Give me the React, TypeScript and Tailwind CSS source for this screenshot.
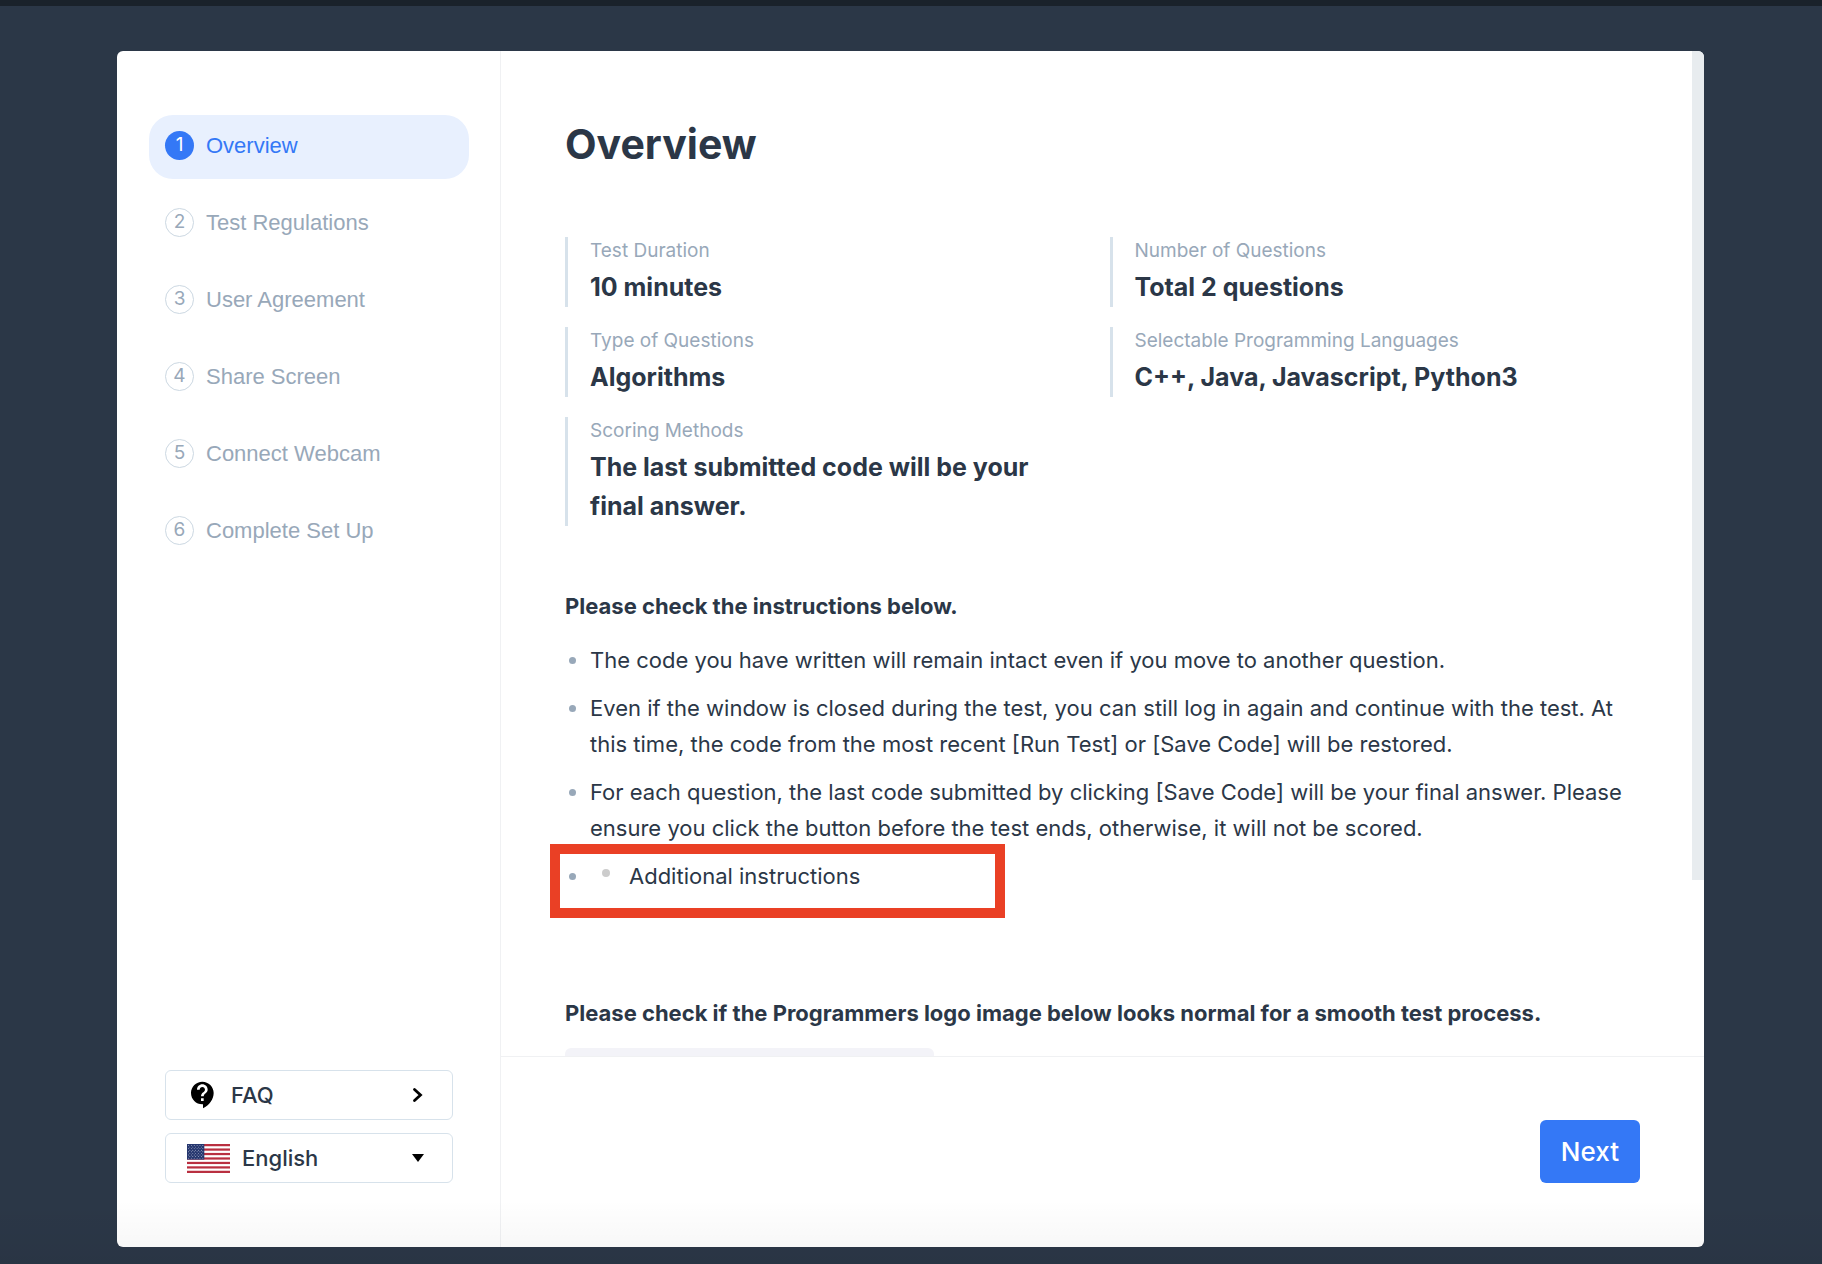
import { MdContactSupport } from "react-icons/md";

const steps = [
  "Overview",
  "Test Regulations",
  "User Agreement",
  "Share Screen",
  "Connect Webcam",
  "Complete Set Up",
];

const summary = [
  { label: "Test Duration", value: "10 minutes" },
  { label: "Number of Questions", value: "Total 2 questions" },
  { label: "Type of Questions", value: "Algorithms" },
  {
    label: "Selectable Programming Languages",
    value: "C++, Java, Javascript, Python3",
  },
  {
    label: "Scoring Methods",
    value: "The last submitted code will be your final answer.",
  },
];

const instructions = [
  "The code you have written will remain intact even if you move to another question.",
  "Even if the window is closed during the test, you can still log in again and continue with the test. At this time, the code from the most recent [Run Test] or [Save Code] will be restored.",
  "For each question, the last code submitted by clicking [Save Code] will be your final answer. Please ensure you click the button before the test ends, otherwise, it will not be scored.",
];

const stripes = [0, 1, 2, 3, 4, 5, 6];
const starRows = [0, 1, 2, 3, 4, 5, 6, 7, 8];

const UsFlag = () => (
  <svg className="h-[29px] w-[43px] shrink-0" viewBox="0 0 43 29" aria-hidden="true">
    <rect width="43" height="29" fill="#fff" />
    {stripes.map((i) => (
      <rect key={i} y={i * 4.46} width="43" height="2.23" fill="#b92f40" />
    ))}
    <rect width="17.3" height="15.6" fill="#26376f" />
    {starRows.map((row) =>
      (row % 2 ? [0, 1, 2, 3, 4] : [0, 1, 2, 3, 4, 5]).map((col) => (
        <circle
          key={`${row}-${col}`}
          cx={1.45 + (row % 2 ? 1.44 : 0) + col * 2.88}
          cy={1.5 + row * 1.58}
          r="0.45"
          fill="#e4e7f2"
        />
      ))
    )}
  </svg>
);

const Dot = () => (
  <span className="mx-1 mt-[15px] size-[7px] shrink-0 rounded-full bg-[#98a8b9]"></span>
);

const Sidebar = () => {
  return (
    <aside className="flex w-96 shrink-0 flex-col justify-between border-r border-[#f0f1f3] py-16 pr-[31px] pl-8">
      <nav>
        <ol className="flex flex-col gap-[13px] font-['Liberation_Sans',Arial,sans-serif]">
          {steps.map((step, i) => (
            <li key={step}>
              <a
                href={`#step-${i + 1}`}
                className={
                  i === 0
                    ? "flex h-16 items-center gap-3 rounded-3xl bg-[#e8f0fe] px-4 pb-1 text-[#3478f6]"
                    : "flex h-16 items-center gap-3 rounded-3xl px-4 pb-1 text-[#98a8b9]"
                }
              >
                <span
                  className={
                    i === 0
                      ? "flex size-[29px] items-center justify-center rounded-full bg-[#3478f6] font-['Inter',sans-serif] text-[19px] text-white"
                      : "flex size-[29px] items-center justify-center rounded-full border border-[#ccd8e2] font-['Inter',sans-serif] text-[19px]"
                  }
                >
                  {i + 1}
                </span>
                <span className="text-[22px]">{step}</span>
              </a>
            </li>
          ))}
        </ol>
      </nav>

      <div className="flex flex-col gap-[13px] px-4 text-[22px] font-medium">
        <a
          href="#faq"
          className="flex h-[50px] items-center rounded-md border border-[#d7e2eb] pr-[27px] pl-[21px]"
        >
          <MdContactSupport className="mr-3 size-8 text-black" />
          FAQ
          <svg className="ml-auto size-4" viewBox="0 0 16 16" aria-hidden="true">
            <path
              d="M5.5 2.5 11.5 8 5.5 13.5"
              fill="none"
              stroke="#000"
              strokeWidth="2.8"
              strokeLinecap="round"
            />
          </svg>
        </a>
        <div className="flex h-[50px] items-center rounded-md border border-[#d7e2eb] pr-7 pl-[21px]">
          <UsFlag />
          <select
            aria-label="Language"
            className="ml-3 min-w-0 flex-1 appearance-none bg-transparent"
          >
            <option>English</option>
          </select>
          <svg className="h-2 w-3" viewBox="0 0 12 8" aria-hidden="true">
            <path d="M0 0h12L6 8z" fill="#000" />
          </svg>
        </div>
      </div>
    </aside>
  );
};

const Overview = () => {
  return (
    <section className="relative min-h-0 flex-1 overflow-hidden px-16 pt-16">
      <h1 className="text-[41px] leading-[58px] font-bold">Overview</h1>

      {/* Summary */}
      <dl className="mt-16 grid grid-cols-2 gap-x-3.5 gap-y-5">
        {summary.map((item) => (
          <div key={item.label} className="border-l-[3px] border-[#d7e2eb] pr-8 pl-[22px]">
            <dt className="text-[19px] leading-[27px] text-[#98a8b9]">{item.label}</dt>
            <dd className="mt-1 text-[25px] leading-[39px] font-bold">{item.value}</dd>
          </div>
        ))}
      </dl>

      {/* Instructions */}
      <h2 className="mt-[62px] text-[22px] leading-9 font-bold">
        Please check the instructions below.
      </h2>
      <ul className="mt-[18px] flex flex-col gap-3 text-[22px] leading-9">
        {instructions.map((text) => (
          <li key={text} className="flex">
            <Dot />
            <p className="ml-[10px]">{text}</p>
          </li>
        ))}
        <li className="relative flex">
          <Dot />
          <ul className="ml-[10px] flex">
            <li className="flex">
              <span className="mt-[11px] mr-[19px] ml-3 size-2 shrink-0 rounded-full bg-[#ccc]"></span>
              Additional instructions
            </li>
          </ul>
          <span className="absolute -top-3.5 -left-[15px] h-[74px] w-[455px] border-[10px] border-[#ea4025]"></span>
        </li>
      </ul>

      {/* Logo check */}
      <h2 className="mt-[101px] text-[22px] leading-9 font-bold">
        Please check if the Programmers logo image below looks normal for a smooth test process.
      </h2>
      <div className="mt-[17px] h-40 w-[369px] rounded-md bg-[#f3f3f8]"></div>

      <div className="absolute top-0 right-0 h-[82.5%] w-3 bg-[#e8ecef]"></div>
    </section>
  );
};

const App = () => {
  return (
    <div className="relative flex h-screen flex-col bg-[#2b3747] font-['Inter',sans-serif] text-[#2b3747]">
      <div className="h-1.5 bg-[#1a222b]"></div>
      <div className="flex min-h-0 flex-1 pt-[45px] pr-[118px] pb-[17px] pl-[117px]">
        <div className="flex flex-1 overflow-hidden rounded-md bg-white">
          <Sidebar />
          <main className="flex min-w-0 flex-1 flex-col">
            <Overview />
            <footer className="flex justify-end border-t border-[#f0f1f3] px-16 pt-[63px] pb-16">
              <button
                type="button"
                className="h-[63px] rounded-md bg-[#3478f6] px-[21px] text-[26px] font-medium text-white"
              >
                Next
              </button>
            </footer>
          </main>
        </div>
      </div>
      <div className="pointer-events-none absolute inset-x-0 bottom-0 h-16 bg-gradient-to-t from-black/4 to-transparent"></div>
    </div>
  );
};

export default App;
